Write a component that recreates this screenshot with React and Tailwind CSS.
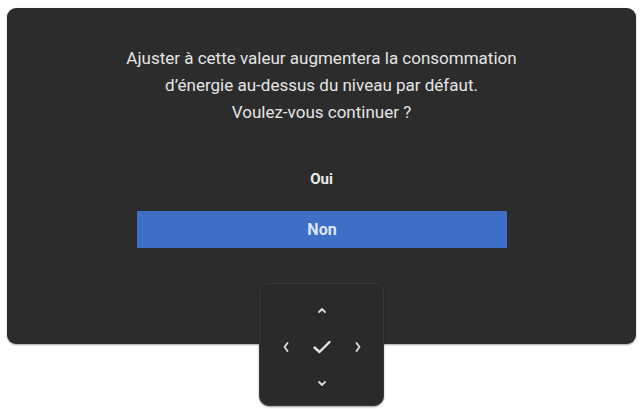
import React from 'react';

const Chevron = ({ d }) => (
  <svg width="14" height="14" viewBox="0 0 14 14">
    <path d={d} fill="none" stroke="#d8d8d8" strokeWidth="1.9" strokeLinecap="round" strokeLinejoin="round" />
  </svg>
);

export default function App() {
  return (
    <div className="relative w-[640px] h-[409px] bg-white overflow-hidden" style={{ fontFamily: 'Roboto, "Noto Sans", sans-serif' }}>
      {/* Dialog */}
      <div className="absolute left-[7px] top-[8px] w-[629px] h-[336px] rounded-[9px] bg-[#2c2c2c] shadow-[0_1px_2px_rgba(0,0,0,0.35)]">
        <div className="pt-[37px] flex flex-col items-center text-[17px] leading-[27px] text-[#e4e4e4]">
          <p>Ajuster à cette valeur augmentera la consommation</p>
          <p>d’énergie au-dessus du niveau par défaut.</p>
          <p>Voulez-vous continuer ?</p>
        </div>
        <div className="mt-[43px] flex justify-center text-[15px] leading-[20px] font-bold text-[#ececec]">Oui</div>
        <div className="mt-[22px] ml-[130px] w-[370px] h-[37px] bg-[#3d6fc6] flex items-center justify-center text-[16px] font-bold text-[#dce6f6]">
          Non
        </div>
      </div>

      {/* Joystick */}
      <div className="absolute left-[259px] top-[283px] w-[125px] h-[123px] rounded-[10px] bg-[#2a2a2a] border border-[#3a3a3a] shadow-[0_1px_2px_rgba(0,0,0,0.4)] flex justify-center pt-[7px]">
        <div className="grid grid-cols-[36px_36px_36px] grid-rows-[37px_37px_37px] place-items-center">
          <div />
          <Chevron d="M4 9 L7 6 L10 9" />
          <div />
          <Chevron d="M8.5 3 L5.5 7 L8.5 11" />
          <svg width="22" height="18" viewBox="0 0 22 18">
            <path d="M3.5 9.5 L8.5 14 L18.5 4" fill="none" stroke="#e6e6e6" strokeWidth="2.4" strokeLinecap="round" strokeLinejoin="round" />
          </svg>
          <Chevron d="M5.5 3 L8.5 7 L5.5 11" />
          <div />
          <Chevron d="M4 5 L7 8 L10 5" />
          <div />
        </div>
      </div>
    </div>
  );
}
